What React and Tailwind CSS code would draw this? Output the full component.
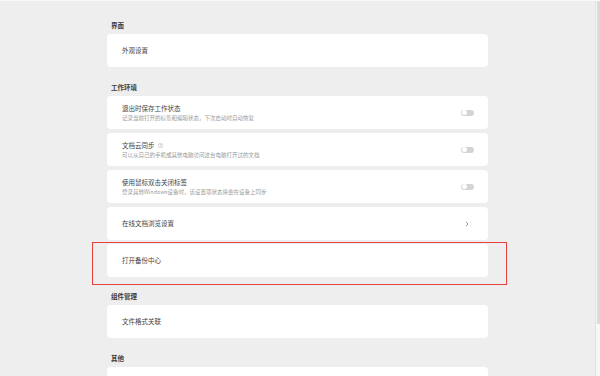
import { useState } from 'react'

const font = { fontFamily: '"Noto Sans CJK SC", "Noto Sans", sans-serif' }

function Toggle({ on, onClick }) {
  return (
    <button onClick={onClick}
      className={`relative h-[6px] w-[13px] shrink-0 rounded-full ${on ? 'bg-[#3b82f6]' : 'bg-[#d4d4d4]'}`}>
      <span className={`absolute top-[0.5px] h-[5px] w-[5px] rounded-full bg-white ${on ? 'left-[7.5px]' : 'left-[0.5px]'}`} />
    </button>
  )
}

function Header({ children }) {
  return <div className="mb-[4px] h-[10px] pl-[4px] text-[6.5px] font-bold leading-[10px] text-[#3a3a3a]">{children}</div>
}

function Card({ children }) {
  return (
    <div className="flex h-[33px] items-center justify-between rounded-[4px] bg-white pl-[15px] pr-[14px]">
      {children}
    </div>
  )
}

function Title({ children }) {
  return <div className="text-[6.5px] leading-[9px] text-[#444]">{children}</div>
}

function Sub({ children }) {
  return <div className="mt-[1px] text-[5.5px] leading-[8px] text-[#9a9a9a]">{children}</div>
}

export default function App() {
  const [toggles, setToggles] = useState([false, false, false])
  const flip = i => setToggles(t => t.map((v, j) => (j === i ? !v : v)))

  return (
    <div className="flex h-[376px] w-[600px] overflow-hidden border-t border-[#f8f8f8] bg-[#eeeeee]" style={font}>
      {/* main */}
      <div className="relative flex-1">
        <div className="ml-[107px] w-[381px] pt-[19px]">
          <Header>界面</Header>
          <Card><Title>外观设置</Title></Card>

          <div className="mt-[15px]">
            <Header>工作环境</Header>
            <div className="flex flex-col gap-[4px]">
              <Card>
                <div>
                  <Title>退出时保存工作状态</Title>
                  <Sub>记录当前打开的标签和编辑状态，下次启动时自动恢复</Sub>
                </div>
                <Toggle on={toggles[0]} onClick={() => flip(0)} />
              </Card>
              <Card>
                <div>
                  <div className="flex items-center gap-[3px]">
                    <Title>文档云同步</Title>
                    <svg width="5" height="5" viewBox="0 0 10 10" fill="none" stroke="#aaa" strokeWidth="1">
                      <circle cx="5" cy="5" r="4.4" />
                      <path d="M3.7 4a1.3 1.3 0 1 1 1.8 1.2c-.4.2-.5.4-.5.8" />
                      <circle cx="5" cy="7.4" r=".3" fill="#aaa" />
                    </svg>
                  </div>
                  <Sub>可以从自己的手机或其他电脑访问这台电脑打开过的文档</Sub>
                </div>
                <Toggle on={toggles[1]} onClick={() => flip(1)} />
              </Card>
              <Card>
                <div>
                  <Title>使用鼠标双击关闭标签</Title>
                  <Sub>登录其他Windows设备时，该设置项状态将会在设备上同步</Sub>
                </div>
                <Toggle on={toggles[2]} onClick={() => flip(2)} />
              </Card>
              <Card>
                <Title>在线文档浏览设置</Title>
                <svg width="4" height="6" viewBox="0 0 4 6" fill="none" stroke="#777" strokeWidth="0.8" className="mr-[5px]">
                  <path d="M1 0.8 3 3 1 5.2" />
                </svg>
              </Card>
              <Card><Title>打开备份中心</Title></Card>
            </div>
          </div>

          <div className="mt-[14px]">
            <Header>组件管理</Header>
            <Card><Title>文件格式关联</Title></Card>
          </div>

          <div className="mt-[15px]">
            <Header>其他</Header>
            <Card><Title>&nbsp;</Title></Card>
          </div>
        </div>

        {/* highlight annotation */}
        <div className="pointer-events-none absolute left-[92px] top-[241px] h-[43px] w-[415px] border-[1.5px] border-[#e8403a]" />
      </div>

      {/* scrollbar */}
      <div className="w-[5px] border-l border-[#e2e2e2] bg-[#f7f7f7] pl-[0.5px] pr-[0.5px]">
        <div className="h-[323px] rounded-[1px] bg-[#dadada]" />
      </div>
    </div>
  )
}
